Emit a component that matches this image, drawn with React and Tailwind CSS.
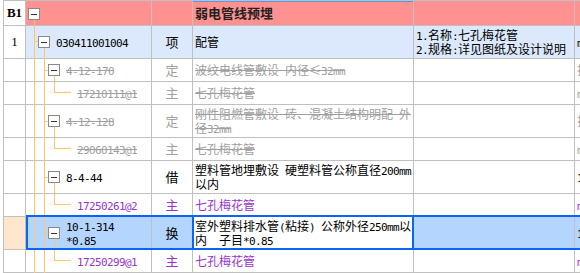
import React from "react";

const G = "text-[#a0a0a0]";
const P = "text-[#9933cc]";
const K = "text-black";

function T({ s }) {
  const parts = s.split(/([\x20-\x7e]+)/);
  return (
    <>
      {parts.map((p, i) =>
        /^[\x20-\x7e]+$/.test(p) ? (
          <span key={i} className="font-['DejaVu_Sans_Mono',monospace] text-[11px] tracking-[-0.62px] whitespace-pre">
            {p}
          </span>
        ) : (
          <React.Fragment key={i}>{p}</React.Fragment>
        )
      )}
    </>
  );
}

function L({ lines, strike = false }) {
  const arr = Array.isArray(lines) ? lines : [lines];
  return (
    <>
      {arr.map((l, i) => (
        <div key={i} className="h-[14px] leading-[14px]">
          {strike ? (
            <span className="relative inline-block h-[14px]">
              <T s={l} />
              <span className="absolute left-0 right-0 top-[7px] h-px bg-[#a0a0a0]" />
            </span>
          ) : (
            <T s={l} />
          )}
        </div>
      ))}
    </>
  );
}

function Cell({ w, bg = "", pl = "", center = false, className = "", children }) {
  return (
    <div
      className={`${w} ${bg} ${pl} shrink-0 h-full border-r border-[#c0c0c0] flex items-center overflow-hidden whitespace-nowrap ${
        center ? "justify-center" : ""
      } ${className}`}
    >
      {children}
    </div>
  );
}

function Row({ h, bg0 = "bg-white", bg = "bg-white", bg3, c0, c0cls = "", c1, c1pl, c2, c3, c3extra, c4, c5, tone = K, strike = false, children }) {
  return (
    <div className={`relative flex ${h} border-b border-[#c0c0c0]`}>
      <Cell w="w-[22px]" bg={bg0} center className={`font-['Liberation_Serif',serif] text-[13px] ${c0cls}`}>
        {c0}
      </Cell>
      <Cell w="w-[126px]" bg={bg} pl={c1pl}>
        {c1 && (
          <div className={tone}>
            <L lines={c1} strike={strike} />
          </div>
        )}
      </Cell>
      <Cell w="w-[41px]" bg={bg} center>
        {c2 && <div className={`text-[13px] leading-[14px] ${tone}`}>{c2}</div>}
      </Cell>
      <Cell w="w-[221px]" bg={bg3 || bg} pl="pl-[2px]" className="relative">
        {c3extra}
        {c3 && (
          <div className={tone}>
            <L lines={c3} strike={strike} />
          </div>
        )}
      </Cell>
      <Cell w="w-[161px]" bg={bg} pl="pl-[2px]">
        {c4 && (
          <div className="text-black">
            <L lines={c4} />
          </div>
        )}
      </Cell>
      <Cell w="w-[60px]" bg={bg} pl="pl-[2px]">
        {c5 && (
          <div className={tone}>
            <L lines={c5} />
          </div>
        )}
      </Cell>
      {children}
    </div>
  );
}

function Box({ x, y }) {
  return (
    <g>
      <rect x={x + 0.5} y={y + 0.5} width="11" height="11" fill="#ffffff" stroke="#8a8a8a" strokeWidth="1" />
      <line x1={x + 3} x2={x + 9} y1={y + 6.5} y2={y + 6.5} stroke="#333333" strokeWidth="1" />
    </g>
  );
}

function Tree() {
  const o = "#ffc66e";
  return (
    <svg className="absolute left-0 top-0 pointer-events-none" width="152" height="273" viewBox="0 0 152 273">
      <line x1="34.5" x2="34.5" y1="20" y2="273" stroke={o} />
      <line x1="34" x2="38" y1="41.5" y2="41.5" stroke={o} />
      <line x1="44.5" x2="44.5" y1="48" y2="273" stroke={o} />
      <line x1="44" x2="48" y1="70.5" y2="70.5" stroke={o} />
      <line x1="44" x2="48" y1="121.5" y2="121.5" stroke={o} />
      <line x1="44" x2="48" y1="177.5" y2="177.5" stroke={o} />
      <line x1="44" x2="48" y1="233.5" y2="233.5" stroke={o} />
      <line x1="54.5" x2="54.5" y1="76" y2="92" stroke={o} />
      <line x1="54" x2="71" y1="92.5" y2="92.5" stroke={o} />
      <line x1="54.5" x2="54.5" y1="127" y2="148" stroke={o} />
      <line x1="54" x2="71" y1="148.5" y2="148.5" stroke={o} />
      <line x1="54.5" x2="54.5" y1="183" y2="204" stroke={o} />
      <line x1="54" x2="71" y1="204.5" y2="204.5" stroke={o} />
      <line x1="54.5" x2="54.5" y1="239" y2="260" stroke={o} />
      <line x1="54" x2="71" y1="260.5" y2="260.5" stroke={o} />
      <Box x={28} y={8} />
      <Box x={38} y={36} />
      <Box x={48} y={64} />
      <Box x={48} y={115} />
      <Box x={48} y={171} />
      <Box x={48} y={227} />
    </svg>
  );
}

export default function App() {
  const pink = "bg-[#ff9191]";
  const lblue = "bg-[#dce8fb]";
  const sel = "bg-[#b4d5fe]";
  return (
    <div className="relative w-[580px] h-[273px] overflow-hidden bg-white text-[12px] text-black font-['Noto_Sans_CJK_SC',sans-serif]">
      <div className="ml-[3px] w-[640px] border-l border-t border-[#c0c0c0]">
        <Row
          h="h-[25px]"
          bg={pink}
          c0="B1"
          c0cls="font-bold"
          c3extra={
            <>
              <span className="absolute left-0 -right-px top-0 h-px bg-[#4a9cf0]" />
              <span className="font-bold text-[13px] leading-[14px] text-[#222]">弱电管线预埋</span>
            </>
          }
        />
        <Row
          h="h-[33px]"
          bg={lblue}
          c0="1"
          c1pl="pl-[30px]"
          c1="030411001004"
          c2="项"
          c3="配管"
          c4={["1.名称:七孔梅花管", "2.规格:详见图纸及设计说明"]}
          c5="m"
        />
        <Row h="h-[23px]" tone={G} strike c1pl="pl-[40px]" c1="4-12-170" c2="定" c3="波纹电线管敷设 内径≤32mm" c5="折" />
        <Row h="h-[23px]" tone={G} strike c1pl="pl-[51px]" c1="17210111@1" c2="主" c3="七孔梅花管" c5="m" />
        <Row
          h="h-[33px]"
          tone={G}
          strike
          c1pl="pl-[40px]"
          c1="4-12-128"
          c2="定"
          c3={["刚性阻燃管敷设 砖、混凝土结构明配 外", "径32mm"]}
          c5="折"
        />
        <Row h="h-[23px]" tone={G} strike c1pl="pl-[51px]" c1="29060143@1" c2="主" c3="七孔梅花管" c5="m" />
        <Row
          h="h-[33px]"
          c1pl="pl-[40px]"
          c1="8-4-44"
          c2="借"
          c3={["塑料管地埋敷设 硬塑料管公称直径200mm", "以内"]}
          c5="1"
        />
        <Row h="h-[23px]" tone={P} c1pl="pl-[51px]" c1="17250261@2" c2="主" c3="七孔梅花管" c5="m" />
        <Row
          h="h-[33px]"
          bg0="bg-[#ffe6cc]"
          bg={sel}
          bg3="bg-white"
          c1pl="pl-[40px]"
          c1={["10-1-314", "*0.85"]}
          c2="换"
          c3={["室外塑料排水管(粘接) 公称外径250mm以", "内  子目*0.85"]}
          c5="1"
        >
          <div className="absolute z-10 left-[22px] top-[-2px] h-[35px] w-[620px] border-2 border-[#0b64f5] pointer-events-none" />
          <div className="absolute z-10 left-[188px] top-[-2px] h-[35px] w-[222px] border-2 border-[#0b64f5] pointer-events-none" />
        </Row>
        <Row h="h-[23px]" tone={P} c1pl="pl-[51px]" c1="17250299@1" c2="主" c3="七孔梅花管" c5="m" />
      </div>
      <Tree />
    </div>
  );
}
